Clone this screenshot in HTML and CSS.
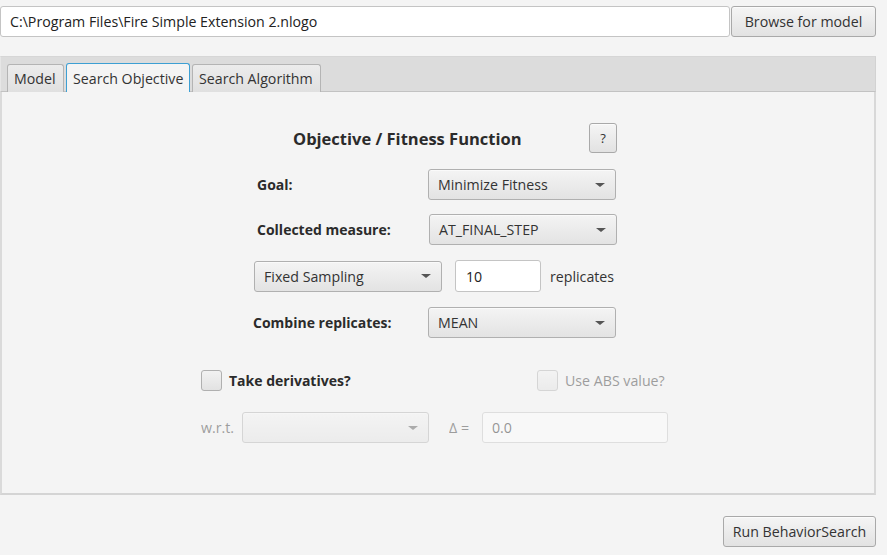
FILE: index.html
```html
<!DOCTYPE html>
<html>
<head>
<meta charset="utf-8">
<link rel="stylesheet" href="styles.css">
</head>
<body>
<div class="app">
  <div class="top-row">
    <div class="text-field path-field">C:\Program Files\Fire Simple Extension 2.nlogo</div>
    <div class="button browse-btn">Browse for model</div>
  </div>
  <div class="tab-pane">
    <div class="tab-header">
      <div class="tab tab-model">Model</div>
      <div class="tab tab-selected">Search Objective</div>
      <div class="tab tab-algo">Search Algorithm</div>
    </div>
    <div class="tab-content">
      <div class="form">
        <div class="row title-row">
          <div class="title">Objective / Fitness Function</div>
          <div class="button help-btn">?</div>
        </div>
        <div class="row goal-row">
          <div class="label bold goal-label">Goal:</div>
          <div class="combo"><span>Minimize Fitness</span><i class="arrow"></i></div>
        </div>
        <div class="row measure-row">
          <div class="label bold measure-label">Collected measure:</div>
          <div class="combo"><span>AT_FINAL_STEP</span><i class="arrow"></i></div>
        </div>
        <div class="row sampling-row">
          <div class="combo sampling-combo"><span>Fixed Sampling</span><i class="arrow"></i></div>
          <div class="text-field reps-field">10</div>
          <div class="label reps-label">replicates</div>
        </div>
        <div class="row combine-row">
          <div class="label bold combine-label">Combine replicates:</div>
          <div class="combo"><span>MEAN</span><i class="arrow"></i></div>
        </div>
        <div class="row deriv-row">
          <div class="check"></div>
          <div class="label bold deriv-label">Take derivatives?</div>
          <div class="check disabled"></div>
          <div class="label disabled abs-label">Use ABS value?</div>
        </div>
        <div class="row wrt-row disabled">
          <div class="label wrt-label">w.r.t.</div>
          <div class="combo wrt-combo"><span></span><i class="arrow"></i></div>
          <div class="label delta-label">Δ =</div>
          <div class="text-field delta-field">0.0</div>
        </div>
      </div>
    </div>
  </div>
  <div class="bottom-row">
    <div class="button run-btn">Run BehaviorSearch</div>
  </div>
</div>
</body>
</html>
```
FILE: styles.css
```css
* { box-sizing: border-box; }
html, body {
  margin: 0;
  padding: 0;
  background: #f4f4f4;
  width: 887px;
  height: 555px;
  overflow: hidden;
  font-family: "Open Sans", "Noto Sans", sans-serif;
  font-size: 14.2px;
  color: #333;
}
.app { width: 887px; }
.top-row {
  display: flex;
  padding-top: 6px;
  width: 876px;
  gap: 1px;
}
.text-field {
  background: #fff;
  border: 1px solid #c4c4c4;
  border-radius: 3px;
  display: flex;
  align-items: center;
  padding-left: 9px;
  color: #222;
}
.path-field { width: 730px; height: 31px; }
.button {
  border: 1px solid #a9a9a9;
  border-radius: 3px;
  background: linear-gradient(#f5f5f5, #e2e2e2);
  box-shadow: inset 0 1px 0 #fbfbfb;
  display: flex;
  align-items: center;
  justify-content: center;
  color: #333;
}
.browse-btn { width: 145px; height: 31px; }

.tab-pane {
  margin-top: 19px;
  width: 876px;
}
.tab-header {
  height: 36px;
  background: #dcdcdc;
  border-top: 1px solid #d6d6d6;
  border-left: 1px solid #e6e6e6;
  border-right: 1px solid #d2d2d2;
  display: flex;
  align-items: flex-end;
  padding-left: 6px;
  gap: 2px;
  border-bottom: 1px solid #c2c2c2;
}
.tab {
  height: 28px;
  border: 1px solid #b4b4b4;
  border-bottom: none;
  border-radius: 3px 3px 0 0;
  background: linear-gradient(#ececec, #e0e0e0);
  display: flex;
  align-items: center;
  padding: 0 6px;
  color: #333;
  margin-bottom: -1px;
  white-space: nowrap;
}
.tab-model { width: 57px; }
.tab-selected {
  width: 124px;
  background: #f4f4f4;
  border-color: #3d9fd3;
  height: 29px;
}
.tab-algo { width: 129px; }
.tab-content {
  height: 403px;
  border: 1px solid #cfcfcf;
  border-top: none;
  border-bottom: 2px solid #d4d4d4;
  border-left: 2px solid #dadada;
  border-right: 2px solid #d8d8d8;
  background: #f4f4f4;
  padding-left: 199px;
  padding-top: 31px;
}
.form { width: 470px; }
.row { display: flex; align-items: center; }
.label { white-space: nowrap; }
.bold { font-weight: bold; color: #2b2b2b; font-size: 14px; }
.title-row { height: 30px; }
.title {
  font-weight: bold;
  font-size: 16.5px;
  margin-left: 92px;
  width: 296px;
  color: #2b2b2b;
}
.help-btn { width: 28px; height: 30px; font-size: 13px; }

.combo {
  width: 188px;
  height: 31px;
  border: 1px solid #b0b0b0;
  border-radius: 3px;
  background: linear-gradient(#f4f4f4, #e3e3e3);
  box-shadow: inset 0 1px 0 #fafafa;
  display: flex;
  align-items: center;
  justify-content: space-between;
  padding: 0 9px 0 9px;
  color: #333;
}
.arrow {
  width: 0; height: 0;
  border-left: 5px solid transparent;
  border-right: 5px solid transparent;
  border-top: 4px solid #555;
  margin-right: 1px;
}
.goal-row { margin-top: 16px; }
.goal-label { margin-left: 56px; width: 171px; }
.measure-row { margin-top: 14px; }
.measure-label { margin-left: 56px; width: 172px; }
.sampling-row { margin-top: 15px; }
.sampling-combo { margin-left: 53px; }
.reps-field { width: 86px; height: 32px; margin-left: 13px; padding-left: 10px; }
.reps-label { margin-left: 9px; }
.combine-row { margin-top: 15px; }
.combine-label { margin-left: 52px; width: 175px; }
.deriv-row { margin-top: 32px; height: 21px; }
.check {
  width: 21px; height: 21px;
  border: 1px solid #b0b0b0;
  border-radius: 3px;
  background: linear-gradient(#f2f2f2, #e2e2e2);
}
.deriv-label { margin-left: 7px; width: 308px; }
.check.disabled { opacity: 0.45; }
.label.disabled { opacity: 0.45; margin-left: 7px; }
.wrt-row { margin-top: 21px; }
.wrt-row.disabled > * { opacity: 0.45; }
.wrt-label { width: 41px; }
.wrt-combo { width: 187px; }
.delta-label { margin-left: 20px; width: 33px; }
.delta-field { width: 186px; height: 31px; }

.bottom-row {
  display: flex;
  justify-content: flex-end;
  width: 876px;
  margin-top: 21px;
}
.run-btn { width: 153px; height: 31px; }
```
